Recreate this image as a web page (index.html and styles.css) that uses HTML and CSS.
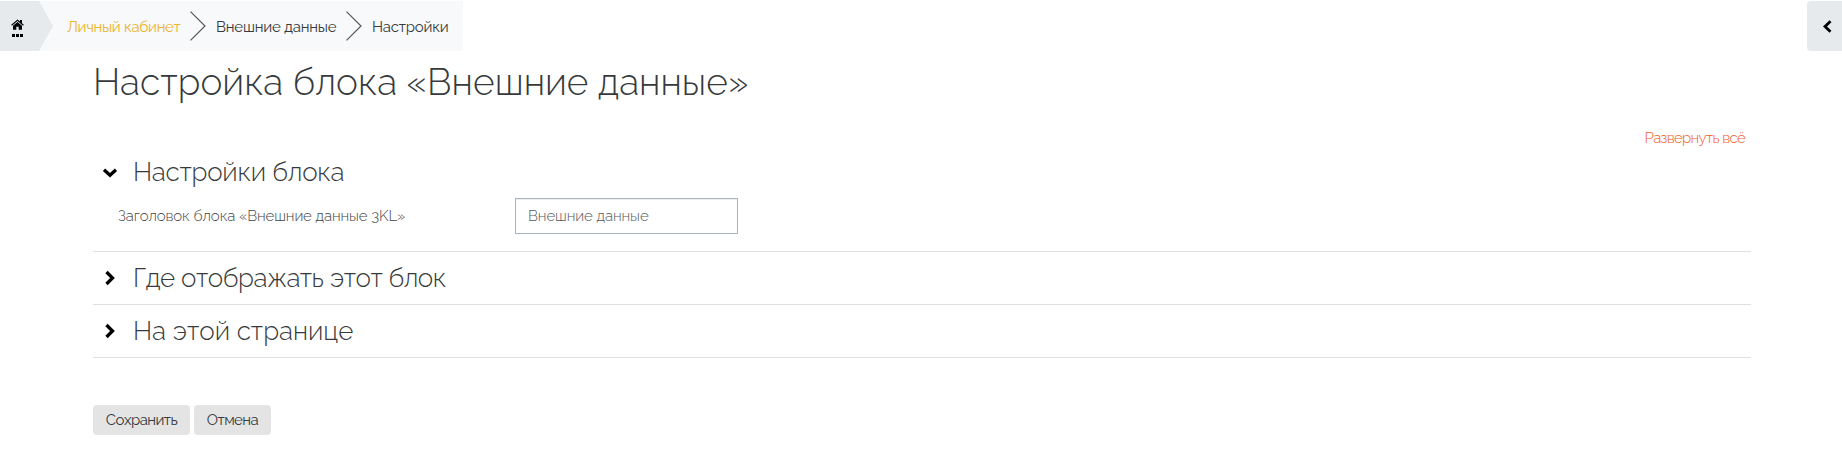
FILE: index.html
```html
<!DOCTYPE html>
<html lang="ru">
<head>
<meta charset="utf-8">
<title>Настройка блока</title>
<link rel="stylesheet" href="styles.css">
</head>
<body>
<header class="topbar">
  <nav class="crumbs">
    <a class="home">
      <svg class="home-shape" width="53" height="50" viewBox="0 0 53 50"><path d="M0 0H39L53 25L39 50H0Z" fill="#e6eaed"/></svg>
      <svg class="home-icon" width="13" height="18" viewBox="0 0 13 18"><path d="M6.5 .4L9 2.5V1.1H11V4.2L12.8 5.8L12.1 6.7L6.5 2.1L.9 6.7L.2 5.8Z"/><path d="M6.5 3.1L11 6.8V10.8H7.7V7.8H5.3V10.8H2V6.8Z"/><path d="M1 15h3v3H1zM5 15h3v3H5zM9 15h3v3H9z"/></svg>
    </a>
    <a class="crumb crumb-link">Личный кабинет</a>
    <svg class="sep" width="16" height="30" viewBox="0 0 16 30"><path d="M.5 .6L15 15L.5 29.4"/></svg>
    <span class="crumb crumb-data">Внешние данные</span>
    <svg class="sep" width="16" height="30" viewBox="0 0 16 30"><path d="M.5 .6L15 15L.5 29.4"/></svg>
    <span class="crumb crumb-now">Настройки</span>
  </nav>
  <button class="drawer"><svg width="9" height="13" viewBox="0 0 9 13"><path d="M7.5 1.2L2 6.5L7.5 11.8"/></svg></button>
</header>
<main class="content">
  <h1 class="title">Настройка блока «Внешние данные»</h1>
  <div class="expand"><a class="expand-link">Развернуть всё</a></div>
  <section class="section open">
    <h2 class="legend"><svg class="chev" width="16" height="16" viewBox="0 0 16 16"><path d="M2 4.8L8 10.3L14 4.8"/></svg><span class="name-a">Настройки блока</span></h2>
    <div class="field">
      <label class="label" for="t">Заголовок блока «Внешние данные 3KL»</label>
      <input class="input" id="t" type="text" value="Внешние данные">
    </div>
  </section>
  <section class="section">
    <h2 class="legend"><svg class="chev" width="16" height="16" viewBox="0 0 16 16"><path d="M4.5 2L10.5 8L4.5 14"/></svg><span class="name-b">Где отображать этот блок</span></h2>
  </section>
  <section class="section">
    <h2 class="legend"><svg class="chev" width="16" height="16" viewBox="0 0 16 16"><path d="M4.5 2L10.5 8L4.5 14"/></svg><span class="name-c">На этой странице</span></h2>
  </section>
  <div class="actions"><button class="btn save">Сохранить</button><button class="btn cancel">Отмена</button></div>
</main>
</body>
</html>
```
FILE: styles.css
```css
* { box-sizing: border-box; }
body {
  margin: 0;
  background: #fff;
  color: #373a3c;
  font: 300 15px/20px Raleway, Lato, "Open Sans", sans-serif;
  overflow: hidden;
  white-space: nowrap;
}
.topbar { display: flex; justify-content: space-between; padding-top: 1px; height: 51px; }
.crumbs { display: flex; align-items: center; width: 463px; height: 50px; background: #f7f9fb; }
.home { position: relative; width: 53px; height: 50px; margin-right: 14px; }
.home-shape { display: block; }
.home-icon { position: absolute; left: 11px; top: 18px; }
.crumb { flex: none; width: 114px; padding-top: 2px; color: #373a3c; font-weight: 400; letter-spacing: -.2px; }
.crumb.crumb-link { color: #ecb42d; letter-spacing: -.32px; }
.crumb.crumb-data { width: 121px; }
.crumb.crumb-now { width: 80px; }
.sep { flex: none; margin: 0 10px 0 9px; fill: none; stroke: #555; stroke-width: 1.2; }
.drawer { display: flex; align-items: center; width: 35px; height: 50px; padding: 0 0 0 16px; border: 0; border-radius: 4px 0 0 4px; background: #e6eaed; }
.drawer path { fill: none; stroke: #000; stroke-width: 2.8; }
.content { padding: 0 91px 0 93px; }
.title { margin: 0; padding: 7px 0 0; height: 77px; font-weight: 300; font-size: 37px; line-height: 48px; letter-spacing: .05px; }
.expand { display: flex; justify-content: flex-end; height: 20px; padding-right: 6px; }
.expand-link { color: #f05a1a; letter-spacing: -.63px; }
.section { height: 53px; border-bottom: 1px solid #dee0e4; }
.section.open { height: 104px; }
.legend { display: flex; align-items: center; height: 52px; margin: 0; padding-left: 9px; gap: 15px; font-weight: 300; font-size: 26px; line-height: 36px; }
.open .legend { height: 49px; }
.name-a { padding-bottom: 2px; letter-spacing: -.22px; }
.name-b { letter-spacing: -.46px; }
.chev { fill: none; stroke: #000; stroke-width: 3.3; }
.field { display: flex; align-items: center; height: 38px; padding-left: 25px; color: #444; }
.label { width: 397px; letter-spacing: -.1px; }
.input { width: 223px; height: 36px; padding: 0 12px; border: 1px solid #a9b3bc; background: #fff; box-shadow: inset 0 1px 1px rgba(0,0,0,.075); color: #55595c; font: inherit; letter-spacing: -.08px; outline: 0; }
.actions { display: flex; gap: 4px; padding-top: 47px; }
.btn { height: 30px; padding: 0; border: 0; border-radius: 4px; background: #e4e4e4; color: #373a3c; font: inherit; font-weight: 400; letter-spacing: -.55px; }
.save { width: 97px; }
.cancel { width: 77px; }
```
